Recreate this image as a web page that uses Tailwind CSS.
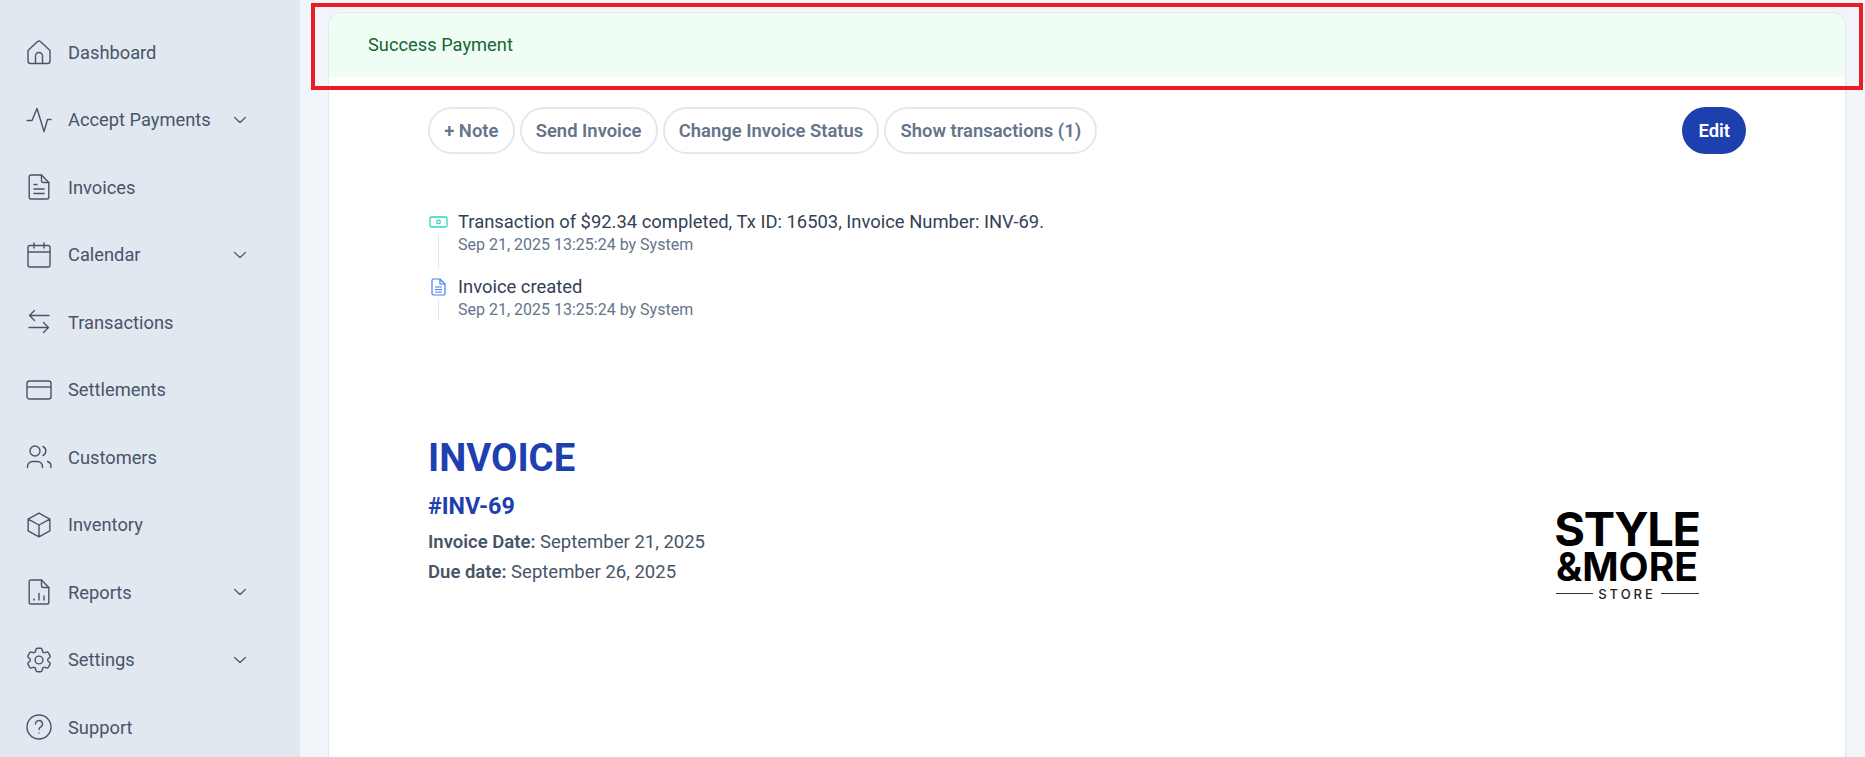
<!DOCTYPE html>
<html lang="en">
<head>
  <meta charset="UTF-8">
  <title>Invoice INV-69</title>
  <script src="https://cdn.jsdelivr.net/npm/@tailwindcss/browser@4"></script>
</head>
<body class="h-[757px] overflow-hidden bg-[#f1f5f9] font-[Roboto,sans-serif] relative">
  <div class="flex h-[757px]">

    <!-- Sidebar -->
    <aside class="w-[300px] shrink-0 bg-[#e2e8f0] pt-[18.5px] text-[#475569] text-[18.3px]">
      <a class="flex items-center h-[67.5px] pl-[26px]">
        <svg class="w-[26px] h-[26px] mr-4" viewBox="0 0 26 26" fill="none" stroke="currentColor" stroke-width="1.4" stroke-linejoin="round"><path d="M2 11.500 11.600 2.600a2 2 0 0 1 2.800 0L24 11.500V22a2.500 2.500 0 0 1-2.500 2.500h-17A2.500 2.500 0 0 1 2 22Z"/><path d="M9.500 24.500V17a3.500 3.500 0 0 1 7 0v7.500"/></svg>
        <span>Dashboard</span>
      </a>
      <a class="flex items-center h-[67.5px] pl-[26px]">
        <svg class="w-[26px] h-[26px] mr-4" viewBox="0 0 26 26" fill="none" stroke="currentColor" stroke-width="1.4" stroke-linecap="round" stroke-linejoin="round"><path d="M1 13.500h5L11 1.500l7 23 3.500-12H25"/></svg>
        <span>Accept Payments</span>
        <svg class="w-[14px] h-[14px] ml-auto mr-[53px]" viewBox="0 0 14 14" fill="none" stroke="currentColor" stroke-width="1.2" stroke-linecap="round" stroke-linejoin="round"><path d="M1.500 4.500 7 9.500l5.500-5"/></svg>
      </a>
      <a class="flex items-center h-[67.5px] pl-[26px]">
        <svg class="w-[26px] h-[26px] mr-4" viewBox="0 0 26 26" fill="none" stroke="currentColor" stroke-width="1.4" stroke-linecap="round" stroke-linejoin="round"><path d="M15.500 1H5a1.800 1.800 0 0 0-1.800 1.800v20.400A1.800 1.800 0 0 0 5 25h16a1.800 1.800 0 0 0 1.800-1.800V8.500Z"/><path d="M15.500 1v5.500a2 2 0 0 0 2 2h5.300M8 10.500h3M8 15h10M8 19.500h10"/></svg>
        <span>Invoices</span>
      </a>
      <a class="flex items-center h-[67.5px] pl-[26px]">
        <svg class="w-[26px] h-[26px] mr-4" viewBox="0 0 26 26" fill="none" stroke="currentColor" stroke-width="1.4" stroke-linecap="round" stroke-linejoin="round"><rect x="2" y="3.500" width="22" height="21.500" rx="2"/><path d="M2 10h22M8 1v5M18 1v5"/></svg>
        <span>Calendar</span>
        <svg class="w-[14px] h-[14px] ml-auto mr-[53px]" viewBox="0 0 14 14" fill="none" stroke="currentColor" stroke-width="1.2" stroke-linecap="round" stroke-linejoin="round"><path d="M1.500 4.500 7 9.500l5.500-5"/></svg>
      </a>
      <a class="flex items-center h-[67.5px] pl-[26px]">
        <svg class="w-[26px] h-[26px] mr-4" viewBox="0 0 26 26" fill="none" stroke="currentColor" stroke-width="1.4" stroke-linecap="round" stroke-linejoin="round"><path d="M23 6.500H3.500M8.500 1.500l-5 5 5 5M3 18.500h19.500M17.500 13.500l5 5-5 5"/></svg>
        <span>Transactions</span>
      </a>
      <a class="flex items-center h-[67.5px] pl-[26px]">
        <svg class="w-[26px] h-[26px] mr-4" viewBox="0 0 26 26" fill="none" stroke="currentColor" stroke-width="1.4" stroke-linejoin="round"><rect x="1" y="4" width="24" height="18" rx="2.500"/><path d="M1 10h24"/></svg>
        <span>Settlements</span>
      </a>
      <a class="flex items-center h-[67.5px] pl-[26px]">
        <svg class="w-[26px] h-[26px] mr-4" viewBox="0 0 26 26" fill="none" stroke="currentColor" stroke-width="1.4" stroke-linecap="round"><circle cx="9" cy="7" r="5"/><path d="M1.500 23.500v-1a5 5 0 0 1 5-5h5a5 5 0 0 1 5 5v1M17 2.500a5 5 0 0 1 0 9M21.500 17.500a5 5 0 0 1 3.500 5v1"/></svg>
        <span>Customers</span>
      </a>
      <a class="flex items-center h-[67.5px] pl-[26px]">
        <svg class="w-[26px] h-[26px] mr-4" viewBox="0 0 24 24" fill="none" stroke="currentColor" stroke-width="1.300" stroke-linecap="round" stroke-linejoin="round"><path d="m22 6.500-10-5.500L2 6.500m20 0-10 5.500m10-5.500v11l-10 5.500M2 6.500l10 5.500M2 6.500v11l10 5.500m0-11v11"/></svg>
        <span>Inventory</span>
      </a>
      <a class="flex items-center h-[67.5px] pl-[26px]">
        <svg class="w-[26px] h-[26px] mr-4" viewBox="0 0 26 26" fill="none" stroke="currentColor" stroke-width="1.4" stroke-linecap="round" stroke-linejoin="round"><path d="M15.500 1H5a1.800 1.800 0 0 0-1.800 1.800v20.400A1.800 1.800 0 0 0 5 25h16a1.800 1.800 0 0 0 1.800-1.800V8.500Z"/><path d="M15.500 1v5.500a2 2 0 0 0 2 2h5.300M8 21v-1M13 21v-6.500M18 21v-4"/></svg>
        <span>Reports</span>
        <svg class="w-[14px] h-[14px] ml-auto mr-[53px]" viewBox="0 0 14 14" fill="none" stroke="currentColor" stroke-width="1.2" stroke-linecap="round" stroke-linejoin="round"><path d="M1.500 4.500 7 9.500l5.500-5"/></svg>
      </a>
      <a class="flex items-center h-[67.5px] pl-[26px]">
        <svg class="w-[26px] h-[26px] mr-4" viewBox="2 2 20 20" fill="none" stroke="currentColor" stroke-width="1.100" stroke-linejoin="round"><path d="M9.594 3.940c.090-.542.560-.940 1.110-.940h2.593c.550 0 1.020.398 1.110.940l.213 1.281c.063.374.313.686.645.870.074.040.147.083.220.127.325.196.720.257 1.075.124l1.217-.456a1.125 1.125 0 0 1 1.370.490l1.296 2.247a1.125 1.125 0 0 1-.260 1.431l-1.003.827c-.293.241-.438.613-.430.992a7.723 7.723 0 0 1 0 .255c-.008.378.137.750.430.991l1.004.827c.424.350.534.955.260 1.430l-1.298 2.247a1.125 1.125 0 0 1-1.369.491l-1.217-.456c-.355-.133-.750-.072-1.076.124a6.470 6.470 0 0 1-.220.128c-.331.183-.581.495-.644.869l-.213 1.281c-.090.543-.560.940-1.110.940h-2.594c-.550 0-1.019-.398-1.110-.940l-.213-1.281c-.062-.374-.312-.686-.644-.870a6.520 6.520 0 0 1-.220-.127c-.325-.196-.720-.257-1.076-.124l-1.217.456a1.125 1.125 0 0 1-1.369-.490l-1.297-2.247a1.125 1.125 0 0 1 .260-1.431l1.004-.827c.292-.240.437-.613.430-.991a6.932 6.932 0 0 1 0-.255c.007-.380-.138-.751-.430-.992l-1.004-.827a1.125 1.125 0 0 1-.260-1.430l1.297-2.247a1.125 1.125 0 0 1 1.370-.491l1.216.456c.356.133.751.072 1.076-.124.072-.044.146-.086.220-.128.332-.183.582-.495.644-.869l.214-1.280Z"/><circle cx="12" cy="12" r="3"/></svg>
        <span>Settings</span>
        <svg class="w-[14px] h-[14px] ml-auto mr-[53px]" viewBox="0 0 14 14" fill="none" stroke="currentColor" stroke-width="1.2" stroke-linecap="round" stroke-linejoin="round"><path d="M1.500 4.500 7 9.500l5.500-5"/></svg>
      </a>
      <a class="flex items-center h-[67.5px] pl-[26px]">
        <svg class="w-[26px] h-[26px] mr-4" viewBox="0 0 26 26" fill="none" stroke="currentColor" stroke-width="1.4" stroke-linecap="round"><circle cx="13" cy="13" r="12"/><path d="M9.500 10a3.500 3.500 0 1 1 5 3.200c-1 .5-1.500 1.200-1.500 2.300"/><path d="M13 19v.100"/></svg>
        <span>Support</span>
      </a>
    </aside>

    <!-- Main -->
    <main class="flex-1 min-w-0 pt-3 pl-[28px] pr-[19px]">
      <div class="h-[760px] bg-white rounded-t-[14px] border border-b-0 border-[#e2e8f0] overflow-hidden">
        <div class="h-[65px] bg-[#effdf4] flex items-center pl-[39px] -mt-px text-[18.3px] text-[#166534]">Success Payment</div>

        <div class="pl-[99px] pr-[99px]">
          <div class="flex items-center gap-[5px] pt-[30px]">
            <button class="h-[47px] px-[14.2px] rounded-full border-2 border-[#e2e8f0] text-[18.4px] font-semibold text-[#64748b]">+ Note</button>
            <button class="h-[47px] px-[14.2px] rounded-full border-2 border-[#e2e8f0] text-[18.4px] font-semibold text-[#64748b]">Send Invoice</button>
            <button class="h-[47px] px-[14.2px] rounded-full border-2 border-[#e2e8f0] text-[18.4px] font-semibold text-[#64748b]">Change Invoice Status</button>
            <button class="h-[47px] px-[14.2px] rounded-full border-2 border-[#e2e8f0] text-[18.4px] font-semibold text-[#64748b]">Show transactions (1)</button>
            <button class="ml-auto h-[47px] px-4 rounded-full bg-[#1e40af] text-[18.4px] font-semibold text-white">Edit</button>
          </div>

          <div class="mt-[55px]">
            <div class="flex h-[65px]">
              <div class="w-[20px] mr-[10px] flex flex-col items-center pt-[7px]">
                <svg class="w-[19px] h-[12px]" viewBox="0 0 19 12" fill="none" stroke="#2dd4bf" stroke-width="1.300"><rect x="1" y="1" width="17" height="10" rx="1.500"/><circle cx="9.500" cy="6" r="1.800"/></svg>
                <div class="w-px h-[35px] mt-[6px] bg-[#e2e8f0]"></div>
              </div>
              <div>
                <p class="text-[18.4px] leading-[25px] text-[#334155]">Transaction of $92.34 completed, Tx ID: 16503, Invoice Number: INV-69.</p>
                <p class="text-[16px] leading-[22px] text-[#64748b]">Sep 21, 2025 13:25:24 by System</p>
              </div>
            </div>
            <div class="flex h-[65px]">
              <div class="w-[20px] mr-[10px] flex flex-col items-center pt-[4px]">
                <svg class="w-[15px] h-[18px]" viewBox="0 0 15 18" fill="none" stroke="#3b82f6" stroke-width="1.200" stroke-linejoin="round"><path d="M9 1H2.500A1.500 1.500 0 0 0 1 2.500v13A1.500 1.500 0 0 0 2.500 17h10a1.500 1.500 0 0 0 1.500-1.500V6Z"/><path d="M9 1v5h5M4 9h7M4 11.500h7M4 14h7"/></svg>
                <div class="w-px h-[22px] mt-[3px] bg-[#e2e8f0]"></div>
              </div>
              <div>
                <p class="text-[18.4px] leading-[25px] text-[#334155]">Invoice created</p>
                <p class="text-[16px] leading-[22px] text-[#64748b]">Sep 21, 2025 13:25:24 by System</p>
              </div>
            </div>
          </div>

          <div class="flex justify-between mt-[57px]">
            <div class="pt-[38px]">
              <h1 class="text-[38.3px] leading-[48px] font-bold text-[#1e40af]">INVOICE</h1>
              <h2 class="mt-[9px] text-[23.3px] leading-[30px] font-bold text-[#1e40af]">#INV-69</h2>
              <p class="mt-[6px] text-[18.5px] leading-[30px] text-[#475569]"><span class="font-semibold">Invoice Date:</span> September 21, 2025</p>
              <p class="text-[18.5px] leading-[30px] text-[#475569]"><span class="font-semibold">Due date:</span> September 26, 2025</p>
            </div>
            <!-- logo -->
            <div class="w-[226px] h-[226px] mt-[45px] mr-[6px] flex flex-col items-center justify-center text-black font-[Inter,sans-serif] leading-none">
              <span class="text-[47px] leading-[42px] font-bold tracking-[-1.3px]">STYLE</span>
              <span class="text-[39px] leading-[34px] font-bold tracking-[0px]">&amp;MORE</span>
              <div class="flex items-center gap-[5px] w-[143px] mt-[3px]">
                <div class="flex-1 h-px bg-[#333]"></div>
                <span class="text-[13px] leading-[14px] font-medium tracking-[3px] text-[#222]">STORE</span>
                <div class="flex-1 h-px bg-[#333]"></div>
              </div>
            </div>
          </div>
        </div>
      </div>
    </main>
  </div>

  <!-- red annotation box over the alert -->
  <div class="absolute left-[311px] top-[3px] w-[1552px] h-[87px] border-[4px] border-[#ed1c24]"></div>
</body>
</html>
